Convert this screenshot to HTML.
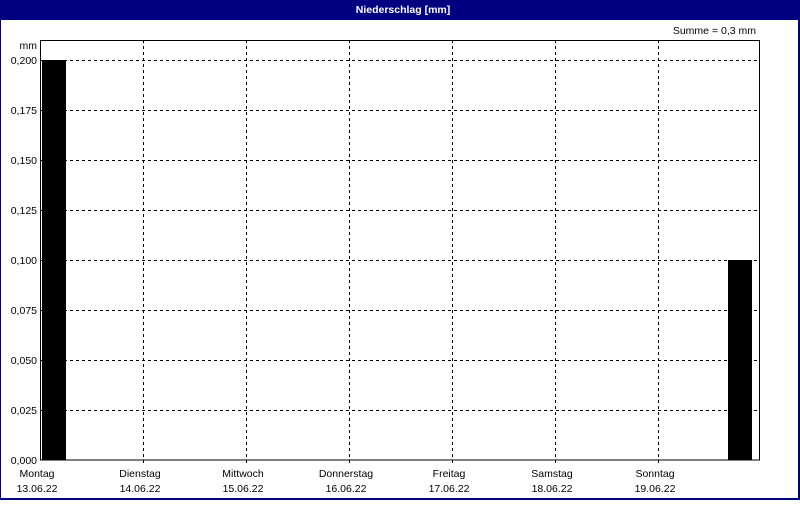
<!DOCTYPE html>
<html><head><style>
body{margin:0;width:800px;height:500px;overflow:hidden;background:#fff;font-family:"Liberation Sans",sans-serif;}
</style></head><body>
<svg width="800" height="500" xmlns="http://www.w3.org/2000/svg" font-family="Liberation Sans, sans-serif" font-size="10.5" shape-rendering="crispEdges">
<rect x="0" y="0" width="800" height="500" fill="#000080"/>
<rect x="1" y="20" width="797" height="478" fill="#fff"/>
<text x="403" y="13" fill="#fff" font-weight="bold" text-anchor="middle">Niederschlag [mm]</text>
<text x="756" y="34" text-anchor="end" fill="#000">Summe = 0,3 mm</text>
<text x="37" y="49" text-anchor="end" fill="#000">mm</text>
<g stroke="#000" stroke-width="1" stroke-dasharray="3,3">
<line x1="40" y1="60.5" x2="760" y2="60.5"/>
<line x1="40" y1="110.5" x2="760" y2="110.5"/>
<line x1="40" y1="160.5" x2="760" y2="160.5"/>
<line x1="40" y1="210.5" x2="760" y2="210.5"/>
<line x1="40" y1="260.5" x2="760" y2="260.5"/>
<line x1="40" y1="310.5" x2="760" y2="310.5"/>
<line x1="40" y1="360.5" x2="760" y2="360.5"/>
<line x1="40" y1="410.5" x2="760" y2="410.5"/>
<line x1="143.5" y1="40" x2="143.5" y2="465"/>
<line x1="246.5" y1="40" x2="246.5" y2="465"/>
<line x1="349.5" y1="40" x2="349.5" y2="465"/>
<line x1="452.5" y1="40" x2="452.5" y2="465"/>
<line x1="555.5" y1="40" x2="555.5" y2="465"/>
<line x1="658.5" y1="40" x2="658.5" y2="465"/>
</g>
<rect x="42" y="60" width="24" height="400" fill="#000"/>
<rect x="728" y="260" width="24" height="200" fill="#000"/>
<rect x="40.5" y="40.5" width="719" height="419.5" fill="none" stroke="#000"/>
<g text-anchor="end" fill="#000">
<text x="37" y="64">0,200</text><text x="37" y="114">0,175</text><text x="37" y="164">0,150</text>
<text x="37" y="214">0,125</text><text x="37" y="264">0,100</text><text x="37" y="314">0,075</text>
<text x="37" y="364">0,050</text><text x="37" y="414">0,025</text><text x="37" y="464">0,000</text>
</g>
<g text-anchor="middle" fill="#000">
<text x="37" y="477">Montag</text><text x="37" y="492">13.06.22</text>
<text x="140" y="477">Dienstag</text><text x="140" y="492">14.06.22</text>
<text x="243" y="477">Mittwoch</text><text x="243" y="492">15.06.22</text>
<text x="346" y="477">Donnerstag</text><text x="346" y="492">16.06.22</text>
<text x="449" y="477">Freitag</text><text x="449" y="492">17.06.22</text>
<text x="552" y="477">Samstag</text><text x="552" y="492">18.06.22</text>
<text x="655" y="477">Sonntag</text><text x="655" y="492">19.06.22</text>
</g>
</svg>
</body></html>
